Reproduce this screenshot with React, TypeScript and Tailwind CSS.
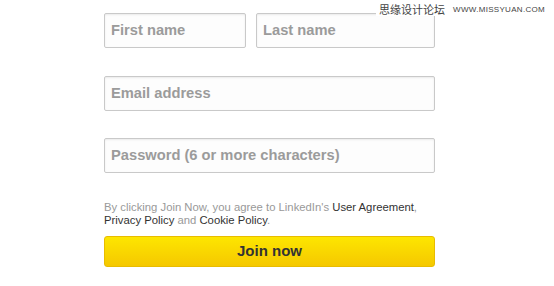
export default function App() {
  const field =
    "h-[35px] w-full rounded-[2px] border border-[#c9c9c9] bg-[#fdfdfd] px-[6px] pb-[2px] text-[14.7px] font-bold text-[#333] shadow-[inset_0_1px_2px_rgba(0,0,0,0.08)] outline-none placeholder:text-[#9b9b9b] placeholder:font-bold";

  return (
    <div
      className="relative h-[286px] w-[554px] overflow-hidden bg-white"
      style={{ fontFamily: '"Liberation Sans", Arial, sans-serif' }}
    >
      {/* watermark */}
      <div className="absolute right-[9px] top-[3px] flex items-center gap-[8px] bg-white pl-[3px]">
        <span
          className="text-[11px] leading-[13px] text-[#444]"
          style={{ fontFamily: '"Noto Sans CJK SC", sans-serif' }}
        >
          思缘设计论坛
        </span>
        <span className="text-[8px] leading-[10px] tracking-[0.3px] text-[#444]">
          WWW.MISSYUAN.COM
        </span>
      </div>

      <div className="ml-[104px] w-[331px] pt-[13px]">
        <div className="flex gap-[10px]">
          <div className="w-[142px]">
            <input className={field} placeholder="First name" />
          </div>
          <div className="flex-1">
            <input className={field} placeholder="Last name" />
          </div>
        </div>

        <div className="mt-[28px]">
          <input className={field} placeholder="Email address" />
        </div>

        <div className="mt-[27px]">
          <input className={field} type="password" placeholder="Password (6 or more characters)" />
        </div>

        <p className="mt-[28px] text-[11.3px] leading-[13px] text-[#999]">
          By clicking Join Now, you agree to LinkedIn's{" "}
          <span className="text-[#333]">User Agreement</span>,
          <br />
          <span className="text-[#333]">Privacy Policy</span> and{" "}
          <span className="text-[#333]">Cookie Policy</span>.
        </p>

        <button className="mt-[9px] flex h-[31px] w-full items-center justify-center rounded-[3px] border border-[#e8bc00] bg-gradient-to-b from-[#fde600] to-[#f5c800] text-[15px] font-bold text-[#333]">
          Join now
        </button>
      </div>
    </div>
  );
}
